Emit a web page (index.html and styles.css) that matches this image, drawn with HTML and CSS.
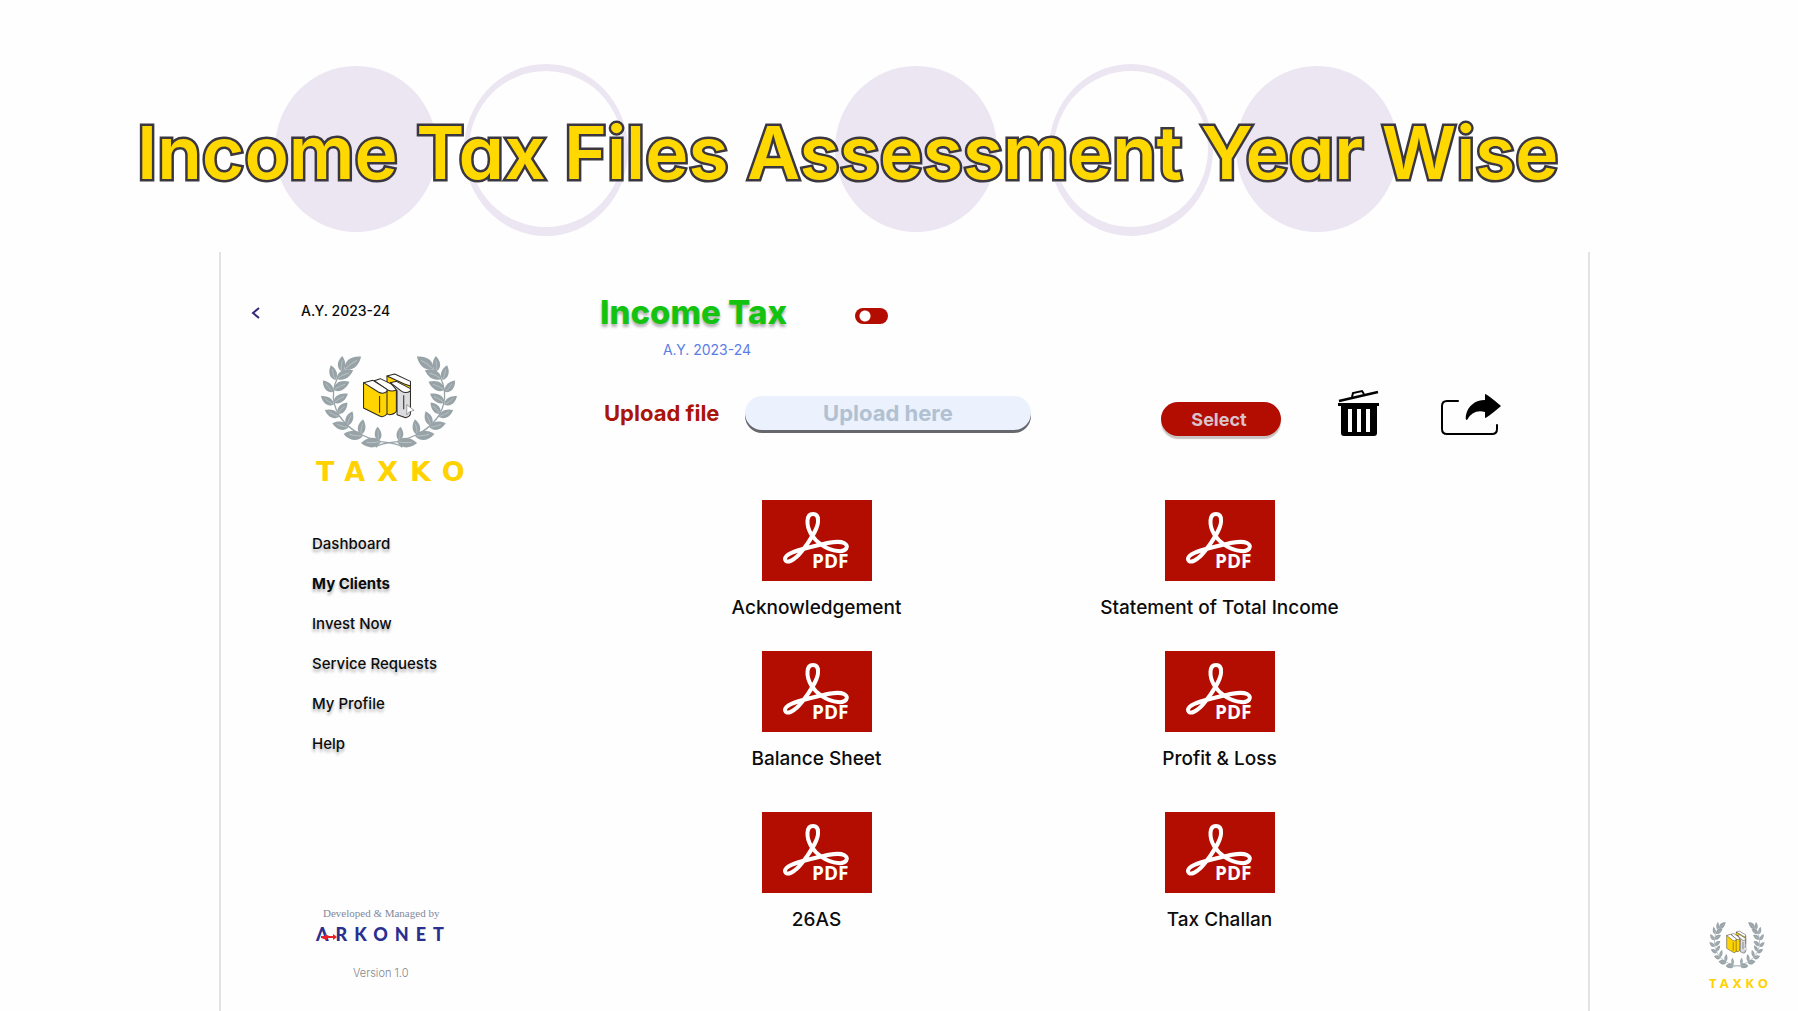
FILE: index.html
```html
<!DOCTYPE html>
<html lang="en">
<head>
<meta charset="utf-8">
<meta name="viewport" content="width=device-width, initial-scale=1">
<title>Income Tax Files Assessment Year Wise</title>
<link rel="stylesheet" href="styles.css">
</head>
<body>
<svg class="defs" width="0" height="0" aria-hidden="true">
  <defs>
    <g id="leaf">
      <path d="M0 0C-17 -10 -17 -32 0 -50C15 -32 15 -10 0 0Z" fill="#98a3a8"/>
      <path d="M0 -4C-2 -14 -1 -26 1 -36" fill="none" stroke="#c3cacd" stroke-width="2"/>
    </g>
    <g id="branch">
      <path d="M136 84C96 120 92 180 120 226C150 270 190 288 244 303C270 306 296 308 308 320" fill="none" stroke="#98a3a8" stroke-width="4"/>
      <use href="#leaf" transform="translate(136 86) rotate(52) scale(1.24)"/>
      <use href="#leaf" transform="translate(126 92) rotate(3) scale(.92)"/>
      <use href="#leaf" transform="translate(108 118) rotate(-17) scale(.92)"/>
      <use href="#leaf" transform="translate(112 114) rotate(63) scale(1.1)"/>
      <use href="#leaf" transform="translate(101 154) rotate(-41) scale(.92)"/>
      <use href="#leaf" transform="translate(102 148) rotate(63) scale(1.08)"/>
      <use href="#leaf" transform="translate(103 192) rotate(-56) scale(.92)"/>
      <use href="#leaf" transform="translate(103 186) rotate(58) scale(1)"/>
      <use href="#leaf" transform="translate(119 228) rotate(-65) scale(.94)"/>
      <use href="#leaf" transform="translate(115 220) rotate(40) scale(.9)"/>
      <use href="#leaf" transform="translate(147 260) rotate(-76) scale(1)"/>
      <use href="#leaf" transform="translate(143 255) rotate(20) scale(.92)"/>
      <use href="#leaf" transform="translate(190 286) rotate(-84) scale(1.16)"/>
      <use href="#leaf" transform="translate(184 282) rotate(8) scale(.94)"/>
      <use href="#leaf" transform="translate(244 303) rotate(-94) scale(1.2)"/>
      <use href="#leaf" transform="translate(238 300) rotate(-6) scale(.84)"/>
    </g>
    <symbol id="emblem" viewBox="62 40 412 285" preserveAspectRatio="none">
      <use href="#branch"/>
      <use href="#branch" transform="translate(536 0) scale(-1 1)"/>
      <g stroke="#2b2822" stroke-width="3" stroke-linejoin="round">
        <path d="M262 106V150L332 176V128Z" fill="#ffd400"/>
        <path d="M262 106L285 100L332 122V136L314 130Z" fill="#fff"/>
        <path d="M224 120L262 140L290 148V212Q282 222 268 222L250 214Z" fill="#ffd400"/>
        <path d="M224 120L242 114L290 138L290 148Q276 154 264 148Z" fill="#fff"/>
        <path d="M272 126L292 150V222L318 231Q332 228 332 218V146Z" fill="#dcdcdf"/>
        <path d="M272 126L290 122L332 144V151Q318 160 306 152Z" fill="#fff"/>
        <path d="M192 126V202L240 226Q252 232 262 220V152L224 124Z" fill="#ffd400"/>
        <path d="M192 126L220 119L262 146V152Q250 162 236 154Z" fill="#fff"/>
        <path d="M240 166V216M312 164V206" fill="none"/>
        <path d="M321 192V222L328 214L343 209Z" fill="#fff" stroke="#77777c" stroke-width="2"/>
      </g>
    </symbol>
    <symbol id="pdf" viewBox="0 0 110 81">
      <path d="M51 14C44 14 44 25 49 34C54 42 64 50 76 51C84 52 88 46 82 43C74 39 54 46 45 48C33 51 23 54 23 59C24 65 33 60 40 51C47 42 57 27 56 20C56 16 54 14 51 14Z" fill="none" stroke="#fff" stroke-width="4" stroke-linejoin="round"/>
      <text class="pdf-text" x="50" y="68">PDF</text>
    </symbol>
  </defs>
</svg>

<header class="banner">
  <svg class="banner-circles" viewBox="0 0 1140 180" aria-hidden="true">
    <g fill="#ece5f2">
      <ellipse cx="86" cy="89" rx="81" ry="83"/>
      <ellipse cx="646" cy="89" rx="81" ry="83"/>
      <ellipse cx="1047" cy="89" rx="81" ry="83"/>
      <path fill-rule="evenodd" d="M194 90a82 86 0 1 0 164 0a82 86 0 1 0 -164 0ZM199 89a77 78 0 1 0 154 0a77 78 0 1 0 -154 0Z"/>
      <path fill-rule="evenodd" d="M779 90a82 86 0 1 0 164 0a82 86 0 1 0 -164 0ZM784 89a77 78 0 1 0 154 0a77 78 0 1 0 -154 0Z"/>
    </g>
  </svg>
  <h1 class="banner-title">Income Tax Files Assessment Year Wise</h1>
</header>

<div class="panel">
  <aside class="sidebar">
    <div class="crumb">
      <button class="back" type="button" aria-label="Back">
        <svg width="10" height="12" viewBox="0 0 10 12" aria-hidden="true"><path d="M8 1L2 6L8 11" fill="none" stroke="#33297a" stroke-width="2"/></svg>
      </button>
      <span class="year">A.Y. 2023-24</span>
    </div>
    <div class="brand">
      <svg class="brand-emblem" aria-hidden="true"><use href="#emblem"/></svg>
      <span class="brand-name">TAXKO</span>
    </div>
    <nav class="menu">
      <a href="#">Dashboard</a>
      <a href="#" class="current">My Clients</a>
      <a href="#">Invest Now</a>
      <a href="#">Service Requests</a>
      <a href="#">My Profile</a>
      <a href="#">Help</a>
    </nav>
    <footer class="credit">
      <span class="credit-by">Developed &amp; Managed by</span>
      <span class="credit-name">
        <svg class="credit-arrow" viewBox="0 0 16 6" aria-hidden="true"><path d="M0 2H4V0L8 2H12V0L16 3L12 6V4H6V6L0 4Z" fill="#e8202a"/></svg>
        <span>ΛRKONET</span>
      </span>
      <span class="version">Version 1.0</span>
    </footer>
  </aside>

  <main class="content">
    <div class="heading">
      <div class="heading-text">
        <h2>Income Tax</h2>
        <p>A.Y. 2023-24</p>
      </div>
      <input class="toggle" type="checkbox" role="switch" aria-label="Income Tax">
    </div>

    <form class="upload">
      <label for="file-name">Upload file</label>
      <input id="file-name" class="upload-box" type="text" placeholder="Upload here">
      <button class="select" type="button">Select</button>
      <button class="tool" type="button" aria-label="Delete">
        <svg width="42" height="48" viewBox="0 0 42 48" aria-hidden="true">
          <path d="M1 12L40 3" stroke="#000" stroke-width="2.4"/>
          <path d="M14 8L15 4L24 2L26 5" fill="none" stroke="#000" stroke-width="2"/>
          <path fill-rule="evenodd" d="M0 14H41V17H39V44Q39 47 36 47H6Q3 47 3 44V17H0ZM10 20V43H14V20ZM19 20V43H23V20ZM28 20V43H32V20Z"/>
        </svg>
      </button>
      <button class="tool" type="button" aria-label="Share">
        <svg width="62" height="48" viewBox="0 0 62 48" aria-hidden="true">
          <path d="M18 12H7Q2 12 2 17V40Q2 45 7 45H52Q57 45 57 40V36" fill="none" stroke="#000" stroke-width="2" stroke-linecap="round"/>
          <path d="M45 5Q47 5 61 17Q47 29 45 29V23Q33 20 27 31Q25 31 26 26C28 17 35 11 45 11Z"/>
        </svg>
      </button>
    </form>

    <section class="files" aria-label="Files">
      <a class="file" href="#"><svg class="tile" aria-hidden="true"><use href="#pdf"/></svg><span>Acknowledgement</span></a>
      <a class="file" href="#"><svg class="tile" aria-hidden="true"><use href="#pdf"/></svg><span>Statement of Total Income</span></a>
      <a class="file" href="#"><svg class="tile" aria-hidden="true"><use href="#pdf"/></svg><span>Balance Sheet</span></a>
      <a class="file" href="#"><svg class="tile" aria-hidden="true"><use href="#pdf"/></svg><span>Profit &amp; Loss</span></a>
      <a class="file" href="#"><svg class="tile" aria-hidden="true"><use href="#pdf"/></svg><span>26AS</span></a>
      <a class="file" href="#"><svg class="tile" aria-hidden="true"><use href="#pdf"/></svg><span>Tax Challan</span></a>
    </section>
  </main>
</div>

<div class="watermark">
  <svg class="watermark-emblem" aria-hidden="true"><use href="#emblem"/></svg>
  <span>TAXKO</span>
</div>
</body>
</html>
```

FILE: styles.css
```css
* {
  box-sizing: border-box;
}

body {
  margin: 0;
  min-height: 100vh;
  display: flex;
  flex-direction: column;
  position: relative;
  background: #fefefe;
  color: #0c0c0c;
  font-family: Inter, "Liberation Sans", sans-serif;
}

button {
  border: 0;
  padding: 0;
  background: none;
  font: inherit;
}

a {
  color: inherit;
  text-decoration: none;
}

.defs {
  position: absolute;
}

/* Banner */
.banner {
  position: relative;
  height: 252px;
  padding: 104px 0 0 137px;
}

.banner-circles {
  position: absolute;
  left: 270px;
  top: 60px;
  width: 1140px;
  height: 180px;
}

.banner-title {
  position: relative;
  margin: 0;
  font-size: 73px;
  line-height: 98px;
  font-weight: 600;
  white-space: nowrap;
  color: #ffd800;
  font-feature-settings: "cv11", "ss03";
  -webkit-text-stroke: 5px #3a3740;
  paint-order: stroke fill;
}

/* Panel */
.panel {
  flex: 1;
  display: flex;
  margin: 0 208px 0 219px;
  border: solid #e3e3e5;
  border-width: 0 2px;
}

.sidebar {
  width: 379px;
  display: flex;
  flex-direction: column;
  padding: 49px 0 28px 91px;
}

.crumb {
  display: flex;
  align-items: center;
  gap: 40px;
  height: 20px;
  margin-left: -61px;
}

.back {
  display: flex;
  padding-top: 4px;
}

.year {
  font-size: 14px;
  line-height: 20px;
  font-weight: 500;
}

.brand {
  display: flex;
  flex-direction: column;
  align-items: flex-start;
  padding-left: 4px;
  margin-top: 33px;
}

.brand-emblem {
  width: 138px;
  height: 95px;
  margin-left: 4px;
}

.brand-name {
  font: bold 27px/32px "DejaVu Sans", sans-serif;
  letter-spacing: 12px;
  margin-top: 7px;
  color: #ffd200;
}

.menu {
  display: flex;
  flex-direction: column;
  align-items: flex-start;
  margin-top: 36px;
  font-size: 15px;
  line-height: 40px;
  font-weight: 500;
  text-shadow: 0 3px 3px rgba(0, 0, 0, 0.3);
}

.current {
  font-weight: 700;
}

.credit {
  display: flex;
  flex-direction: column;
  align-items: flex-start;
  padding-left: 4px;
  margin-top: auto;
}

.credit-by {
  font: 11px/20px "Liberation Serif", serif;
  margin-left: 7px;
  color: #7f899c;
}

.credit-name {
  position: relative;
  font: 900 18px/22px Lato, sans-serif;
  letter-spacing: 7px;
  color: #2b2f8f;
}

.credit-arrow {
  position: absolute;
  left: 5px;
  top: 11px;
  width: 16px;
  height: 6px;
}

.version {
  margin: 18px 0 0 37px;
  font-size: 11px;
  line-height: 20px;
  font-weight: 300;
  color: #85858a;
}

/* Content */
.content {
  flex: 1;
  padding-top: 40px;
}

.heading {
  display: flex;
  align-items: flex-start;
  gap: 68px;
}

.heading-text {
  display: flex;
  flex-direction: column;
  align-items: flex-end;
}

.heading h2 {
  margin: 0;
  font-size: 33px;
  line-height: 40px;
  font-weight: 800;
  color: #14c30f;
  text-shadow: 0 3px 3px rgba(0, 0, 0, 0.3);
}

.heading p {
  margin: 8px 36px 0 0;
  font-size: 14px;
  line-height: 20px;
  color: #5b7de6;
}

.toggle {
  appearance: none;
  width: 33px;
  height: 16px;
  margin: 16px 0 0;
  border-radius: 8px;
  background: radial-gradient(circle at 10px 8px, #fff 5px, #b30c00 6px);
}

.upload {
  display: flex;
  align-items: center;
  height: 56px;
  margin-top: 25px;
  padding-left: 4px;
}

.upload label {
  width: 141px;
  font-size: 22px;
  font-weight: 700;
  color: #ab1408;
}

.upload-box {
  width: 286px;
  height: 34px;
  border: 0;
  border-radius: 17px;
  background: #ebf1fd;
  box-shadow: 0 3px 0 #67686d;
  font: 700 22px/34px Inter, sans-serif;
  text-align: center;
}

.upload-box::placeholder {
  color: #b1c1d1;
}

.select {
  width: 120px;
  height: 34px;
  margin: 12px 57px 0 130px;
  padding-right: 4px;
  border-radius: 17px;
  background: #b30c00;
  box-shadow: 0 3px 1px #c9c3c3;
  font-size: 18px;
  font-weight: 700;
  color: #d8c3cb;
}

.tool {
  display: flex;
}

.tool + .tool {
  margin-left: 60px;
}

.files {
  display: grid;
  grid-template-columns: 1fr 1fr;
  grid-template-rows: 151px 161px auto;
  padding: 59px 167px 0 15px;
}

.file {
  display: flex;
  flex-direction: column;
  align-items: center;
  gap: 16px;
  font-size: 19px;
  line-height: 22px;
  font-weight: 500;
}

.tile {
  width: 110px;
  height: 81px;
  background: #b30c00;
}

.pdf-text {
  font: 700 19px "Open Sans", sans-serif;
  fill: #fff;
}

/* Corner mark */
.watermark {
  position: absolute;
  right: 26px;
  bottom: 18px;
  display: flex;
  flex-direction: column;
  align-items: flex-start;
  font: 700 13px/20px "Noto Sans", sans-serif;
  letter-spacing: 4px;
  color: #ffd200;
}

.watermark-emblem {
  width: 56px;
  height: 48px;
  margin-bottom: 4px;
}
```
